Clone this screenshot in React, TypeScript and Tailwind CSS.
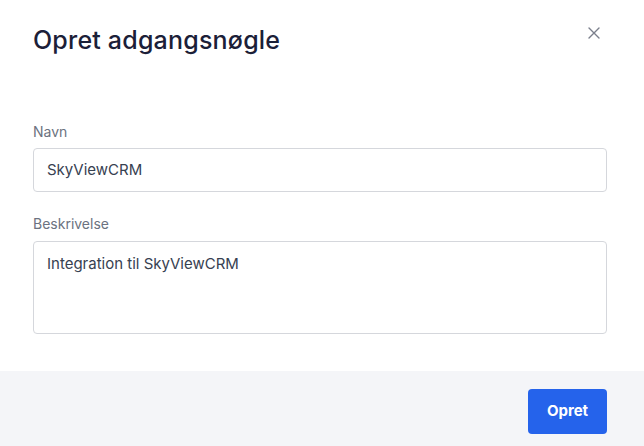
import React from "react";

export default function App() {
  return (
    <div className="w-[644px] h-[446px] bg-white flex flex-col overflow-hidden" style={{ fontFamily: "Inter, 'Noto Sans', sans-serif" }}>
      <div className="flex items-start justify-between pl-[33px] pr-[37px] pt-[24px]">
        <h1 className="text-[25px] leading-[32px] font-medium text-[#1b2038] tracking-[0.2px]">Opret adgangsnøgle</h1>
        <button className="mt-[3px] mr-[7px] text-[#7b7f8c]">
          <svg width="12" height="12" viewBox="0 0 12 12" fill="none" stroke="currentColor" strokeWidth="1.4" strokeLinecap="round">
            <path d="M1 1L11 11M11 1L1 11" />
          </svg>
        </button>
      </div>
      <div className="flex flex-col pl-[33px] pr-[37px] pt-[66px]">
        <label className="text-[14px] leading-[20px] text-[#6b7280]">Navn</label>
        <div className="mt-[6px] h-[44px] border border-[#d5d7dc] rounded-[4px] flex items-center px-[13px] text-[15px] text-[#374151]">SkyViewCRM</div>
        <label className="mt-[22px] text-[14px] leading-[20px] text-[#6b7280]">Beskrivelse</label>
        <div className="mt-[7px] h-[93px] border border-[#d5d7dc] rounded-[4px] px-[13px] pt-[11px] text-[15px] leading-[22px] text-[#374151]">Integration til SkyViewCRM</div>
      </div>
      <div className="mt-[37px] flex-1 bg-[#f4f5f8] flex justify-end items-start pt-[18px] pr-[37px]">
        <button className="w-[79px] h-[45px] bg-[#2563eb] rounded-[4px] text-white text-[15px] font-bold">Opret</button>
      </div>
    </div>
  );
}
